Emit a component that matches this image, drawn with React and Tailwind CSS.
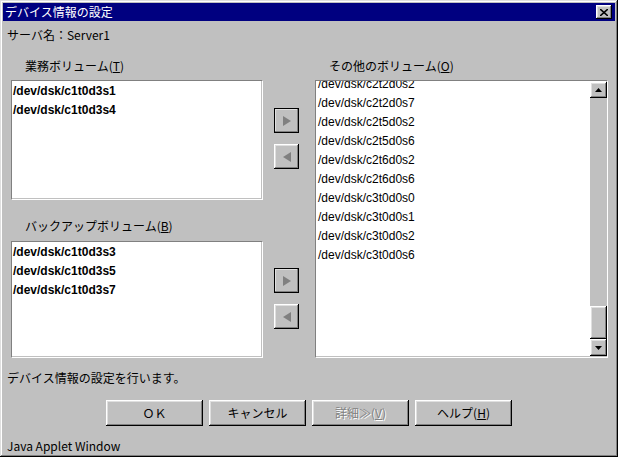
const raised =
  "bg-[#c0c0c0] shadow-[inset_-1px_-1px_0_#000,inset_1px_1px_0_#fff,inset_-2px_-2px_0_#808080,inset_2px_2px_0_#dfdfdf]";
const sunken =
  "bg-white border-t border-l border-t-[#808080] border-l-[#808080] border-b border-r border-b-white border-r-white shadow-[inset_-1px_-1px_0_#c0c0c0]";

const jp = { fontFamily: '"Noto Sans CJK JP", "Noto Sans", sans-serif' };
const arial = { fontFamily: '"Liberation Sans", Arial, sans-serif' };

const rightItems = [
  "/dev/dsk/c2t2d0s2",
  "/dev/dsk/c2t2d0s7",
  "/dev/dsk/c2t5d0s2",
  "/dev/dsk/c2t5d0s6",
  "/dev/dsk/c2t6d0s2",
  "/dev/dsk/c2t6d0s6",
  "/dev/dsk/c3t0d0s0",
  "/dev/dsk/c3t0d0s1",
  "/dev/dsk/c3t0d0s2",
  "/dev/dsk/c3t0d0s6",
];

function ArrowButton({ dir, isDefault }) {
  return (
    <div
      className={`w-[25px] h-[25px] flex items-center justify-center ${raised} ${
        isDefault ? "outline outline-1 outline-black -outline-offset-1" : ""
      }`}
    >
      <svg width="12" height="12" viewBox="0 0 12 12">
        {dir === "right" ? (
          <polygon points="2,1 10,6 2,11" fill="#808080" />
        ) : (
          <polygon points="10,1 2,6 10,11" fill="#808080" />
        )}
      </svg>
    </div>
  );
}

function ListBox({ items, height }) {
  return (
    <div className={`w-full ${sunken} overflow-hidden`} style={{ height }}>
      <div className="pl-[1px] pt-[1px]">
        {items.map((it) => (
          <div
            key={it}
            className="h-[19px] leading-[19px] text-[12px] font-bold text-black"
            style={arial}
          >
            {it}
          </div>
        ))}
      </div>
    </div>
  );
}

function Label({ text, mn }) {
  return (
    <div className="h-[14px] leading-[14px] text-[12px] text-black pl-[14px]" style={jp}>
      {text}(<span className="underline">{mn}</span>)
    </div>
  );
}

function Button({ children, disabled }) {
  return (
    <div
      className={`w-[97px] h-[26px] flex items-center justify-center text-[12px] ${raised} ${
        disabled ? "text-[#808080]" : "text-black"
      }`}
      style={jp}
    >
      {children}
    </div>
  );
}

export default function App() {
  return (
    <div
      className="w-[618px] h-[457px] bg-[#c0c0c0] p-[3px] flex flex-col shadow-[inset_-1px_-1px_0_#000,inset_1px_1px_0_#dfdfdf,inset_-2px_-2px_0_#808080,inset_2px_2px_0_#fff] overflow-hidden"
      style={jp}
    >
      {/* title bar */}
      <div className="h-[18px] bg-[#000080] flex items-center justify-between pl-[2px] pr-[3px]">
        <span className="text-white text-[12px] leading-[18px]">デバイス情報の設定</span>
        <div className={`w-[16px] h-[14px] flex items-center justify-center ${raised}`}>
          <svg width="8" height="7" viewBox="0 0 8 7">
            <path d="M0 0 L8 7 M8 0 L0 7" stroke="#000" strokeWidth="1.6" />
          </svg>
        </div>
      </div>

      <div className="mt-[7px] pl-[4px] h-[14px] leading-[14px] text-[12px] text-black">
        サーバ名：Server1
      </div>

      {/* main area */}
      <div className="mt-[17px] ml-[8px] flex h-[299px]">
        <div className="w-[252px] flex flex-col">
          <Label text="業務ボリューム" mn="T" />
          <div className="mt-[7px]">
            <ListBox items={["/dev/dsk/c1t0d3s1", "/dev/dsk/c1t0d3s4"]} height={120} />
          </div>
          <div className="mt-[19px]">
            <Label text="バックアップボリューム" mn="B" />
          </div>
          <div className="mt-[8px]">
            <ListBox
              items={["/dev/dsk/c1t0d3s3", "/dev/dsk/c1t0d3s5", "/dev/dsk/c1t0d3s7"]}
              height={117}
            />
          </div>
        </div>

        <div className="ml-[11px] w-[25px] flex flex-col">
          <div className="mt-[49px] flex flex-col gap-[11px]">
            <ArrowButton dir="right" isDefault />
            <ArrowButton dir="left" />
          </div>
          <div className="mt-[99px] flex flex-col gap-[11px]">
            <ArrowButton dir="right" isDefault />
            <ArrowButton dir="left" />
          </div>
        </div>

        <div className="ml-[16px] w-[293px] flex flex-col">
          <Label text="その他のボリューム" mn="O" />
          <div className={`mt-[7px] h-[278px] flex ${sunken}`}>
            <div className="flex-1 overflow-hidden">
              <div className="-mt-[6px] pl-[2px]">
                {rightItems.map((it) => (
                  <div
                    key={it}
                    className="h-[19px] leading-[19px] text-[12px] text-black"
                    style={arial}
                  >
                    {it}
                  </div>
                ))}
              </div>
            </div>
            <div className="w-[17px] flex flex-col bg-[#c0c0c0] mt-[1px] mb-[1px]">
              <div className={`h-[16px] flex items-center justify-center ${raised}`}>
                <svg width="7" height="4" viewBox="0 0 7 4">
                  <polygon points="3.5,0 7,4 0,4" fill="#000" />
                </svg>
              </div>
              <div className="flex-1 flex flex-col justify-end">
                <div className={`h-[33px] ${raised}`} />
              </div>
              <div className={`h-[17px] flex items-center justify-center ${raised}`}>
                <svg width="7" height="4" viewBox="0 0 7 4">
                  <polygon points="0,0 7,0 3.5,4" fill="#000" />
                </svg>
              </div>
            </div>
          </div>
        </div>
      </div>

      <div className="mt-[13px] pl-[4px] h-[14px] leading-[14px] text-[12px] text-black">
        デバイス情報の設定を行います。
      </div>

      <div className="mt-[15px] flex justify-center gap-[6px]">
        <Button>ＯＫ</Button>
        <Button>キャンセル</Button>
        <Button disabled>
          <span className="[text-shadow:1px_1px_0_#fff]">
            詳細≫(<span className="underline">V</span>)
          </span>
        </Button>
        <Button>
          ヘルプ(<span className="underline">H</span>)
        </Button>
      </div>

      <div className="mt-[13px] pl-[4px] h-[14px] leading-[14px] text-[12px] text-black">
        Java Applet Window
      </div>
    </div>
  );
}
